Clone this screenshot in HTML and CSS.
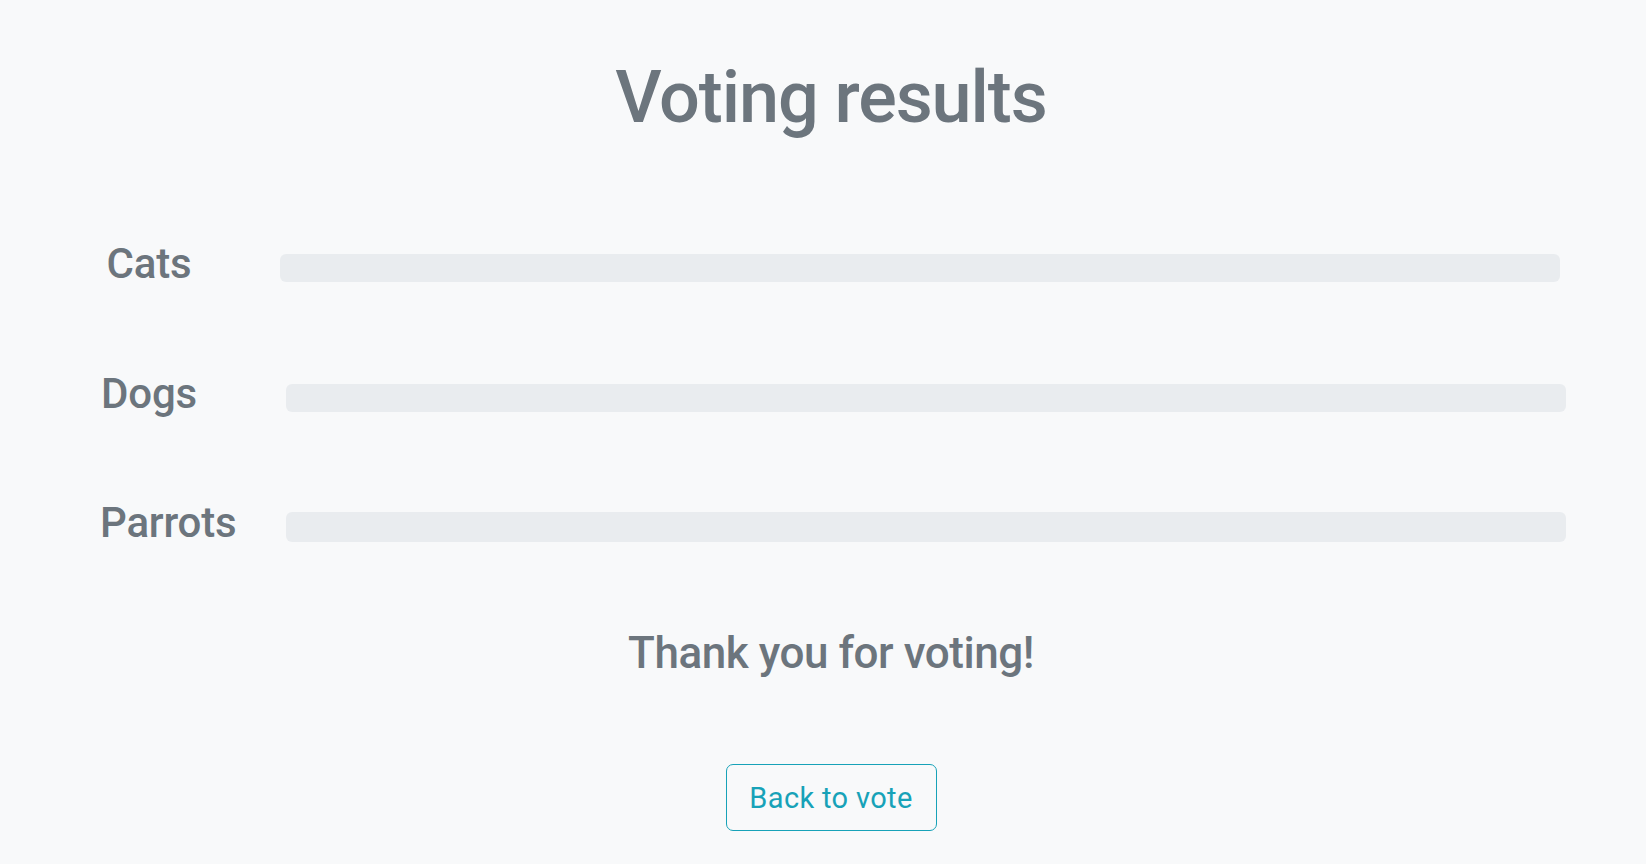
FILE: index.html
```html
<!DOCTYPE html>
<html lang="en">
<head>
<meta charset="utf-8">
<title>Voting results</title>
<link rel="stylesheet" href="styles.css">
</head>
<body>
<main class="page">
  <h1 class="title">Voting results</h1>
  <section class="results">
    <div class="row">
      <span class="label">Cats</span>
      <div class="bar bar--shift"></div>
    </div>
    <div class="row">
      <span class="label">Dogs</span>
      <div class="bar"></div>
    </div>
    <div class="row">
      <span class="label">Parrots</span>
      <div class="bar bar--tall"></div>
    </div>
  </section>
  <p class="thanks">Thank you for voting!</p>
  <a class="btn" href="#">Back to vote</a>
</main>
</body>
</html>
```

FILE: styles.css
```css
html, body {
  margin: 0;
  padding: 0;
  background: #f8f9fa;
}
body {
  font-family: Roboto, Inter, "Liberation Sans", sans-serif;
  color: #6c757d;
  height: 864px;
  overflow: hidden;
}
.page {
  display: flex;
  flex-direction: column;
  align-items: center;
  padding-left: 16px;
}
.title {
  margin: 55px 0 0;
  font-size: 72px;
  line-height: 86px;
  font-weight: 500;
  letter-spacing: -1.1px;
}
.results {
  align-self: stretch;
  display: flex;
  flex-direction: column;
  gap: 81.7px;
  margin-top: 99px;
  padding-left: 84px;
}
.row {
  display: grid;
  grid-template-columns: 186px 1280px;
  align-items: start;
}
.label {
  justify-self: start;
  min-width: 98px;
  text-align: center;
  font-size: 42px;
  line-height: 48px;
  font-weight: 500;
  letter-spacing: -0.2px;
}
.bar {
  height: 28px;
  margin-top: 14px;
  background: #e9ecef;
  border-radius: 6px;
}
.bar--shift {
  margin-left: -6px;
  margin-right: 6px;
}
.bar--tall {
  height: 29.5px;
  margin-top: 13px;
}
.thanks {
  margin: 79.4px 0 0;
  font-size: 44px;
  line-height: 52px;
  font-weight: 500;
  letter-spacing: -0.45px;
}
.btn {
  box-sizing: border-box;
  margin-top: 85.6px;
  width: 211px;
  height: 67px;
  display: flex;
  align-items: center;
  justify-content: center;
  border: 1.6px solid #17a2b8;
  border-radius: 7px;
  color: #17a2b8;
  text-decoration: none;
  font-size: 29px;
  font-weight: 400;
  letter-spacing: 0.35px;
}
```
